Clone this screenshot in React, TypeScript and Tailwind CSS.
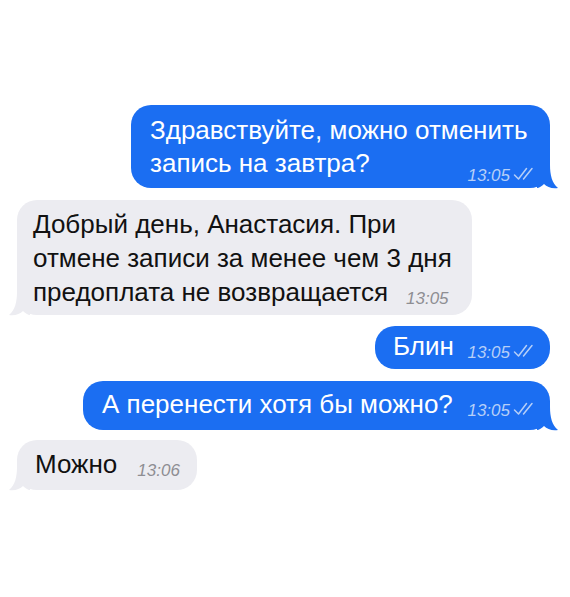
import React from "react";

const BLUE = "#1b6ef2";
const GRAY = "#ececf1";

function Checks() {
  return (
    <svg width="24" height="14" viewBox="0 0 24 14" fill="none" className="ml-[3px]">
      <path d="M1.5 8 L5.5 12 L13.5 1.5" stroke="#b6cff8" strokeWidth="1.5" strokeLinecap="round" strokeLinejoin="round" />
      <path d="M10.5 12 L19 1.5" stroke="#b6cff8" strokeWidth="1.5" strokeLinecap="round" />
    </svg>
  );
}

function TailRight() {
  return (
    <svg width="22" height="24" viewBox="0 0 22 24" className="absolute right-[-9px] bottom-[-1px]">
      <path d="M0 0 H13 C13 10 15 18 21 23 C15 24 10 22 7 19 C5 21 2 23 0 23 Z" fill={BLUE} />
    </svg>
  );
}

function TailLeft() {
  return (
    <svg width="22" height="24" viewBox="0 0 22 24" className="absolute left-[-9px] bottom-[-1px]">
      <path d="M22 0 H9 C9 10 7 18 1 23 C7 24 12 22 15 19 C17 21 20 23 22 23 Z" fill={GRAY} />
    </svg>
  );
}

function OutTime() {
  return (
    <span className="inline-flex items-baseline text-[17px] italic text-[#b6cff8] leading-none">
      13:05
      <Checks />
    </span>
  );
}

function InTime({ t }: { t: string }) {
  return <span className="text-[17px] italic text-[#8e8e93] leading-none">{t}</span>;
}

export default function App() {
  return (
    <div
      className="w-[570px] h-[597px] bg-white flex flex-col pt-[105px] text-[26px] leading-[33px]"
      style={{ fontFamily: '"Liberation Sans", Arial, sans-serif' }}
    >
      {/* outgoing */}
      <div className="relative self-end mr-[20px] w-[419px] h-[83px] rounded-[20px] bg-[#1b6ef2] text-white pl-[19px] pr-[13px] pt-[9px]">
        <div>Здравствуйте, можно отменить</div>
        <div className="flex items-baseline justify-between">
          <span>запись на завтра?</span>
          <span className="relative top-[9px]">
            <OutTime />
          </span>
        </div>
        <TailRight />
      </div>

      {/* incoming */}
      <div className="relative self-start ml-[17px] mt-[12px] w-[455px] h-[115px] rounded-[20px] bg-[#ececf1] text-[#111] pl-[16px] pr-[14px] pt-[7px] leading-[34px]">
        <div>Добрый день, Анастасия. При</div>
        <div>отмене записи за менее чем 3 дня</div>
        <div className="flex items-baseline">
          <span>предоплата не возвращается</span>
          <span className="relative top-[3px] ml-[18px]">
            <InTime t="13:05" />
          </span>
        </div>
        <TailLeft />
      </div>

      <div className="relative self-end mr-[20px] mt-[11px] w-[175px] h-[43px] rounded-[20px] bg-[#1b6ef2] text-white pl-[18px] pr-[13px] flex items-baseline pt-[4px]">
        <span>Блин</span>
        <span className="relative top-[3px] ml-auto">
          <OutTime />
        </span>
      </div>

      <div className="relative self-end mr-[20px] mt-[12px] w-[467px] h-[49px] rounded-[20px] bg-[#1b6ef2] text-white pl-[19px] pr-[13px] flex items-baseline pt-[7px]">
        <span>А перенести хотя бы можно?</span>
        <span className="relative top-[3px] ml-auto">
          <OutTime />
        </span>
        <TailRight />
      </div>

      <div className="relative self-start ml-[17px] mt-[10px] w-[180px] h-[50px] rounded-[20px] bg-[#ececf1] text-[#111] pl-[18px] flex items-baseline pt-[8px]">
        <span>Можно</span>
        <span className="relative top-[3px] ml-[20px]">
          <InTime t="13:06" />
        </span>
        <TailLeft />
      </div>
    </div>
  );
}
